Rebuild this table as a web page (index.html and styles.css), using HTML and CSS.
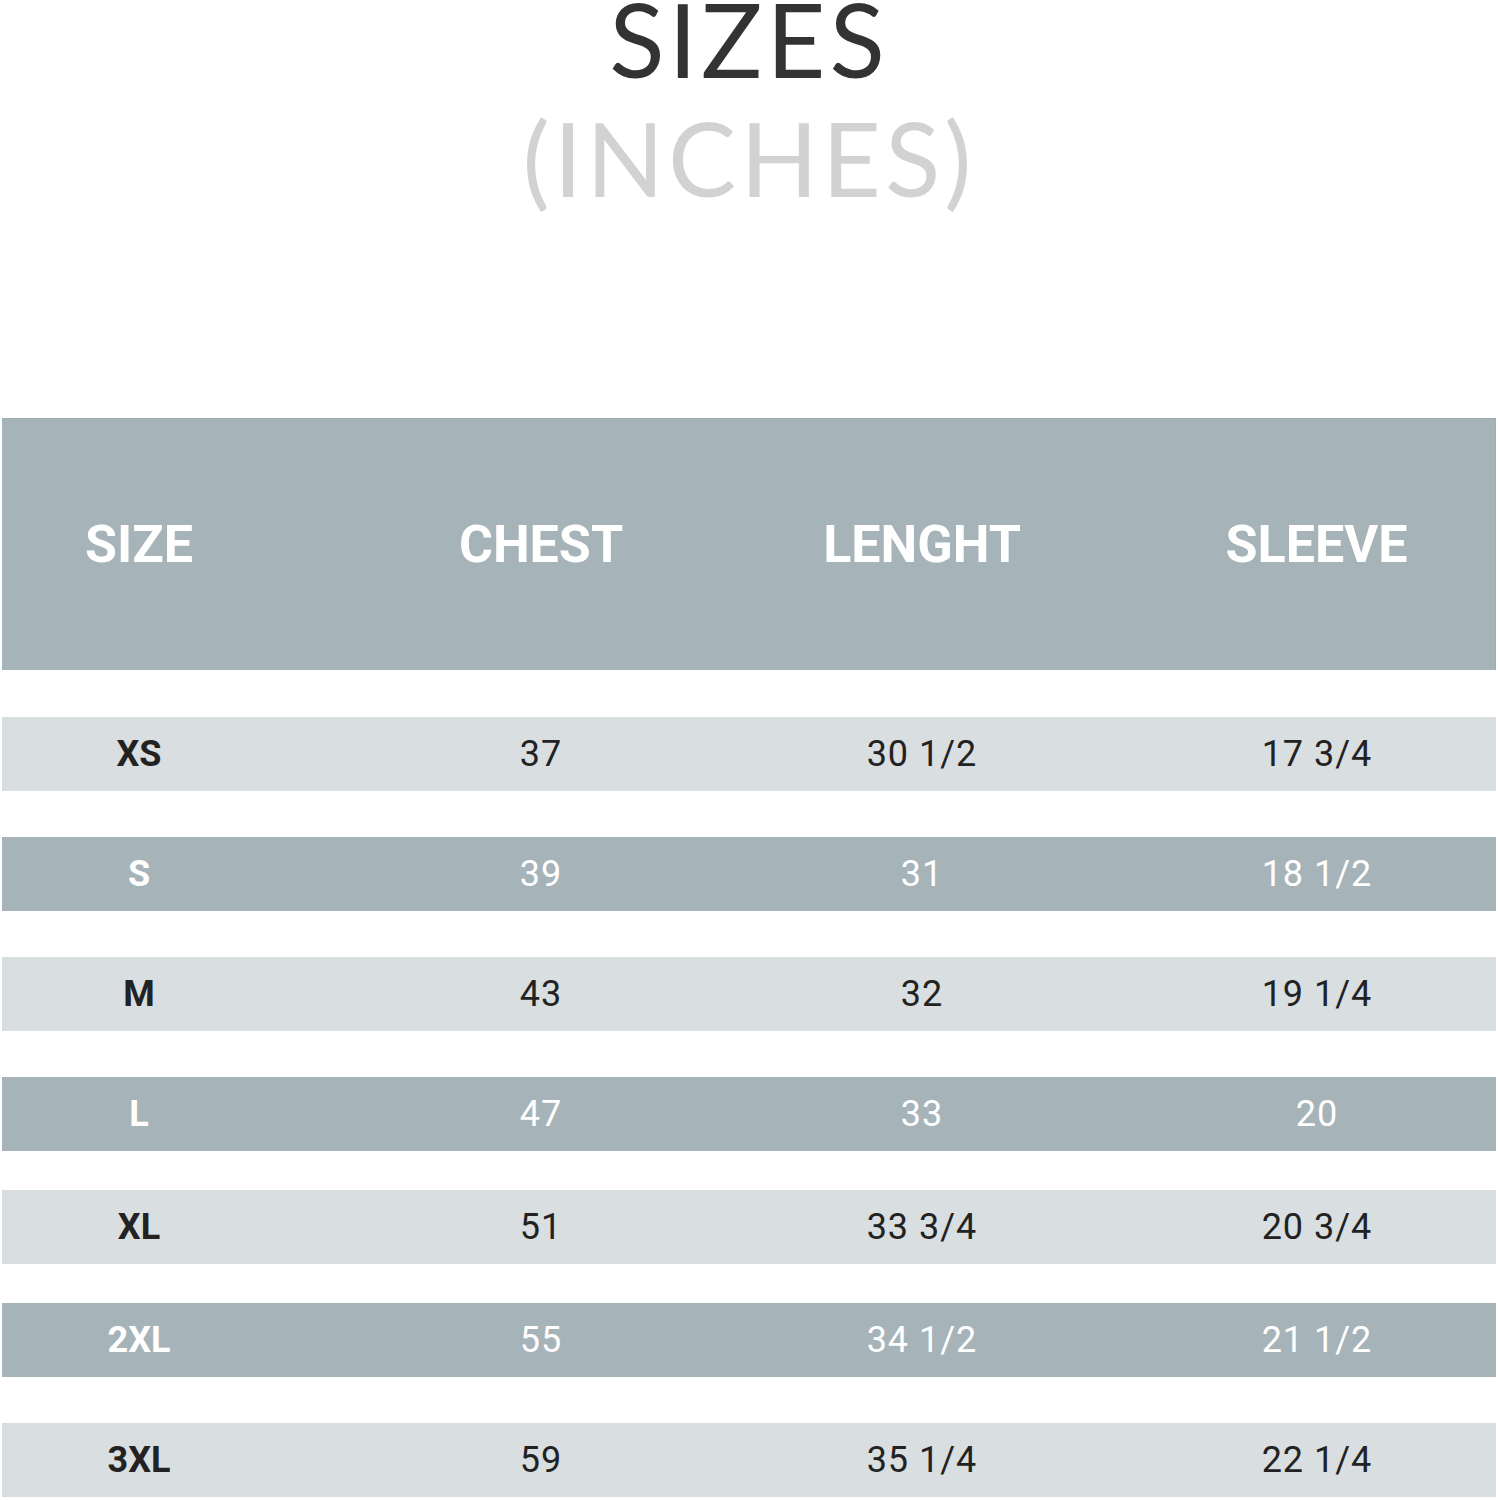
FILE: index.html
```html
<!DOCTYPE html>
<html lang="en">
<head>
<meta charset="utf-8">
<title>Sizes (Inches)</title>
<link rel="stylesheet" href="styles.css">
</head>
<body>
<header class="title">
  <div class="title-main">SIZES</div>
  <div class="title-sub">(INCHES)</div>
</header>
<section class="chart">
  <div class="head">
    <div class="cell">SIZE</div>
    <div class="cell">CHEST</div>
    <div class="cell">LENGHT</div>
    <div class="cell c4">SLEEVE</div>
  </div>
  <div class="rows">
    <div class="row light"><div class="cell sz">XS</div><div class="cell">37</div><div class="cell">30 1/2</div><div class="cell c4">17 3/4</div></div>
    <div class="row dark"><div class="cell sz">S</div><div class="cell">39</div><div class="cell">31</div><div class="cell c4">18 1/2</div></div>
    <div class="row light"><div class="cell sz">M</div><div class="cell">43</div><div class="cell">32</div><div class="cell c4">19 1/4</div></div>
    <div class="row dark tight"><div class="cell sz">L</div><div class="cell">47</div><div class="cell">33</div><div class="cell c4">20</div></div>
    <div class="row light tight"><div class="cell sz">XL</div><div class="cell">51</div><div class="cell">33 3/4</div><div class="cell c4">20 3/4</div></div>
    <div class="row dark"><div class="cell sz">2XL</div><div class="cell">55</div><div class="cell">34 1/2</div><div class="cell c4">21 1/2</div></div>
    <div class="row light"><div class="cell sz">3XL</div><div class="cell">59</div><div class="cell">35 1/4</div><div class="cell c4">22 1/4</div></div>
  </div>
</section>
</body>
</html>
```

FILE: styles.css
```css
html, body {
  margin: 0;
  padding: 0;
  background: #ffffff;
}

body {
  font-family: Roboto, "Liberation Sans", sans-serif;
}

.title {
  text-align: center;
  font-family: Lato, "Open Sans", sans-serif;
  font-weight: 400;
  font-size: 102px;
  letter-spacing: 4px;
}

.title-main {
  color: #333333;
  line-height: 77px;
}

.title-sub {
  color: #d2d2d2;
  line-height: 161px;
}

.chart {
  margin: 180px 2px 0 2px;
}

.head,
.row {
  display: grid;
  grid-template-columns: 274px 530px 232px 1fr;
  align-items: center;
  text-align: center;
}

.head {
  height: 252px;
  background: #a6b3b9;
  color: #ffffff;
  font-weight: 700;
  font-size: 52px;
  letter-spacing: 0;
  box-sizing: border-box;
  border-top: 1px solid #9eabb1;
  border-right: 1px solid #9eabb1;
}

.c4 {
  padding-left: 100px;
}

.rows {
  display: flex;
  flex-direction: column;
  margin-top: 47px;
}

.row {
  height: 74px;
  margin-bottom: 46px;
  font-size: 36px;
  font-weight: 400;
  letter-spacing: 1px;
}

.row.tight {
  margin-bottom: 39px;
}

.row .sz {
  font-weight: 700;
  letter-spacing: 0;
}

.light {
  background: #d9dee1;
  color: #222222;
}

.dark {
  background: #a6b3b9;
  color: #ffffff;
}
```
